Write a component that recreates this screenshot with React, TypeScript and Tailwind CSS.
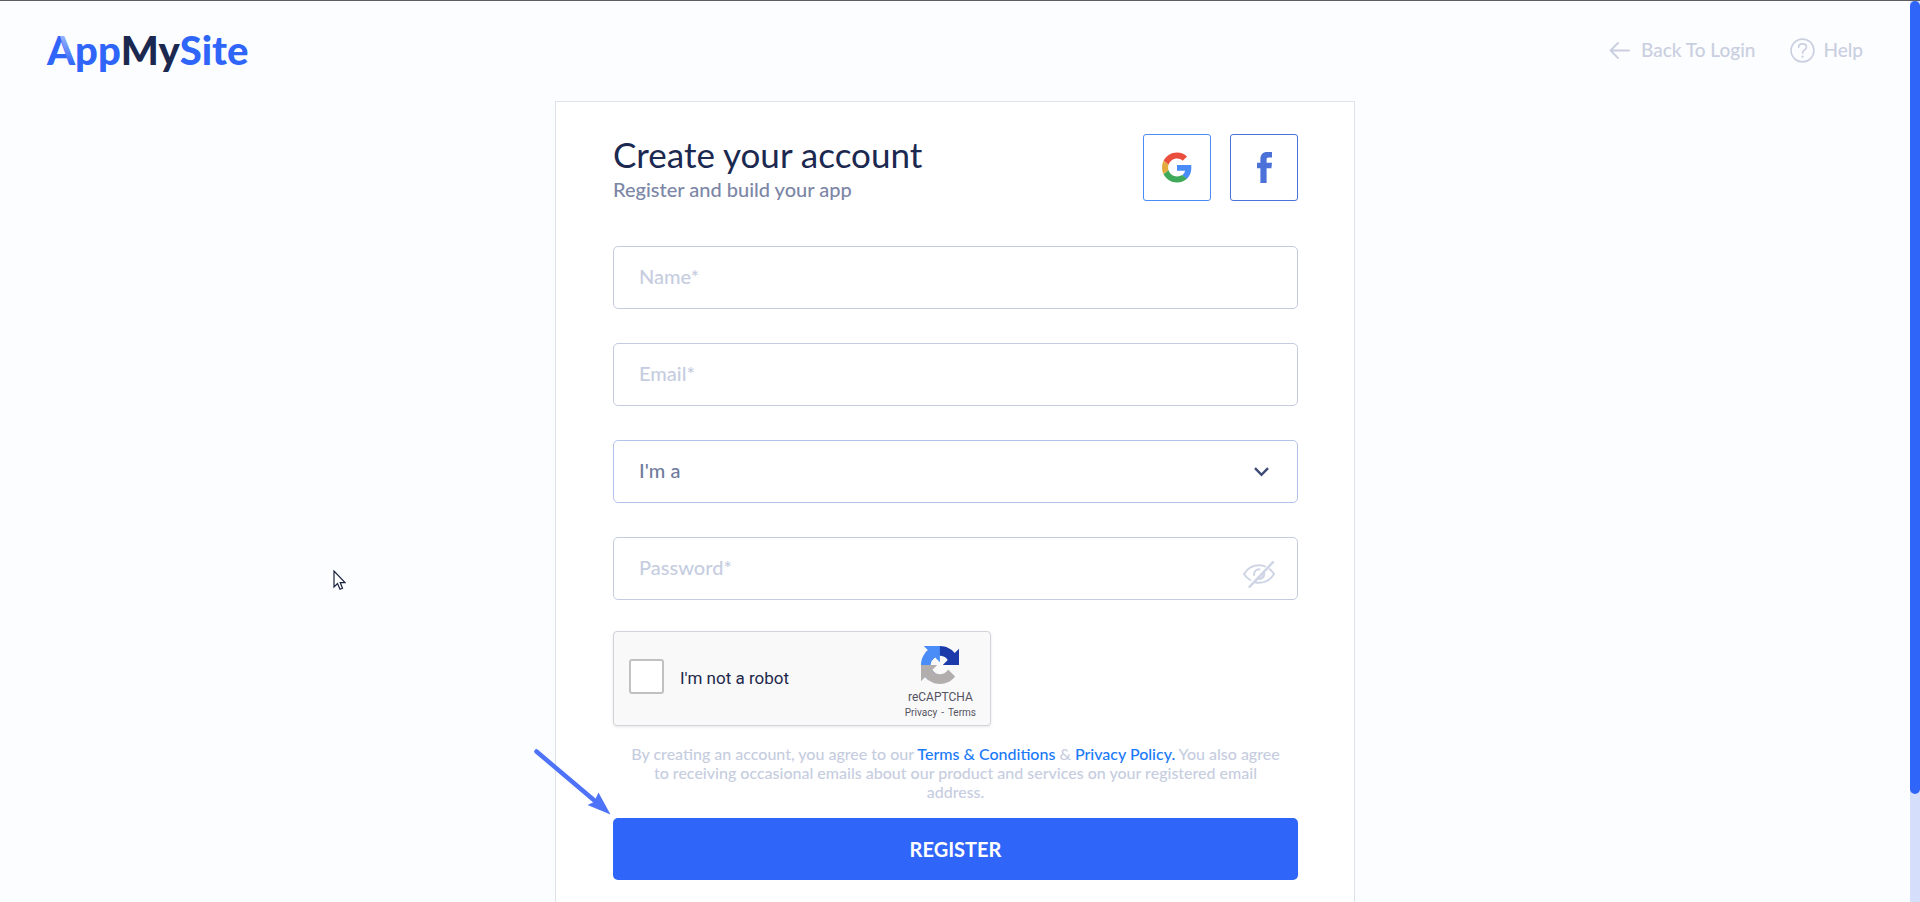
import { useState } from "react";
import type { ReactNode } from "react";

const fieldClass =
  "block h-[63px] w-full rounded-[5px] border border-[#c5cbde] bg-white px-[25px] pb-[3px] text-[20px] font-medium text-[#1b2850] placeholder:text-[#c6cde0] outline-none focus:border-[#2f65f9]";

function Logo() {
  return (
    <a href="#" aria-label="AppMySite" className="relative flex text-[40px] leading-[44px] font-black">
      <span className="text-[#2f65f9]">App</span>
      <span className="text-[#1b2850]">My</span>
      <span className="text-[#2f65f9]">Site</span>
      {/* Pale shading on the right leg of the A */}
      <svg className="pointer-events-none absolute top-2 left-3" width="16" height="29" viewBox="0 0 16 29">
        <defs>
          <linearGradient id="leg" x1="0" y1="0" x2="0" y2="1">
            <stop offset="0" stopColor="#fff" stopOpacity="0.5" />
            <stop offset="1" stopColor="#fff" stopOpacity="0" />
          </linearGradient>
        </defs>
        <path d="M1 0H6L16 29H10Z" fill="url(#leg)" />
      </svg>
    </a>
  );
}

function BackIcon() {
  return (
    <svg width="21" height="17" viewBox="0 0 21 17" fill="none" stroke="currentColor" strokeWidth="1.8" strokeLinecap="round" strokeLinejoin="round">
      <path d="M20 8.5H1.5M9 1L1.5 8.5L9 16" />
    </svg>
  );
}

function HelpIcon() {
  return (
    <svg width="25" height="25" viewBox="0 0 25 25" fill="none" stroke="currentColor" strokeWidth="1.6" strokeLinecap="round">
      <circle cx="12.5" cy="12.5" r="11.4" />
      <path d="M8.6 9.4C8.6 7.2 10.3 5.9 12.5 5.9S16.5 7.3 16.5 9.3C16.5 12 12.6 12 12.6 15.2" />
      <path d="M12.6 18.6V18.7" strokeWidth="2.2" />
    </svg>
  );
}

function GoogleIcon() {
  return (
    <svg width="30" height="31" viewBox="0 0 48 48">
      <path fill="#EA4F3D" d="M24 9.5c3.54 0 6.71 1.22 9.21 3.6l6.85-6.85C35.9 2.38 30.47 0 24 0 14.62 0 6.51 5.38 2.56 13.22l7.98 6.19C12.43 13.72 17.74 9.5 24 9.5z" />
      <path fill="#4A8CF7" d="M46.98 24.55c0-1.57-.15-3.09-.38-4.55H24v9.02h12.94c-.58 2.96-2.26 5.48-4.78 7.18l7.73 6c4.51-4.18 7.09-10.36 7.09-17.65z" />
      <path fill="#E3AA3E" d="M10.53 28.59c-.48-1.45-.76-2.99-.76-4.59s.27-3.14.76-4.59l-7.98-6.19C.92 16.46 0 20.12 0 24c0 3.88.92 7.54 2.56 10.78l7.97-6.19z" />
      <path fill="#3FA95A" d="M24 48c6.48 0 11.93-2.13 15.89-5.81l-7.73-6c-2.15 1.45-4.92 2.3-8.16 2.3-6.26 0-11.57-4.22-13.47-9.91l-7.98 6.19C6.51 42.62 14.62 48 24 48z" />
    </svg>
  );
}

function FacebookIcon() {
  return (
    <svg width="15" height="31" viewBox="0 0 15 31" fill="#4c72da">
      <path d="M3.4 31V16.2H0V10.8H3.4V7.4C3.4 2.6 5.6 0 10.4 0H15V5.4H11.6C10 5.4 9.6 6.2 9.6 7.8V10.8H15L14.4 16.2H9.6V31Z" />
    </svg>
  );
}

function EyeOffIcon() {
  return (
    <svg width="32" height="27" viewBox="0 0 32 27" fill="none" stroke="#cfd5e5" strokeWidth="2" strokeLinecap="round">
      <path d="M7.2 19C4.6 17.5 2.5 15.3 1 13C4.5 7.5 9.8 4.3 16 4.3C18.2 4.3 20.2 4.7 22 5.4" />
      <path d="M26.5 8.2C28.4 9.5 29.8 11.2 31 13C27.6 18.5 22.2 21.7 16 21.7C14.6 21.7 13.2 21.5 12 21.2" />
      <path d="M11 14C10.8 10.5 13 8.4 16.4 8.3" />
      <path d="M16 17.8C19 17.8 21 15.8 21 12.6" strokeWidth="2.6" />
      <path d="M30 1.2L6.5 25.8" strokeWidth="2.4" />
    </svg>
  );
}

function RecaptchaIcon() {
  return (
    <svg width="38" height="38" viewBox="0 0 64 64">
      <path fill="#1c3aa9" d="M64 31.955l-.033-1.37V4.687l-7.16 7.16C50.948 4.674 42.033.093 32.05.093c-10.39 0-19.622 4.96-25.458 12.64l11.736 11.86a15.55 15.55 0 0 1 4.754-5.334c2.05-1.6 4.952-2.906 8.968-2.906.485 0 .86.057 1.135.163 4.976.393 9.288 3.14 11.828 7.124l-8.307 8.307L64 31.953" />
      <path fill="#4a8df8" d="M31.862.094l-1.37.033H4.594l7.16 7.16C4.58 13.147 0 22.06 0 32.046c0 10.39 4.96 19.622 12.64 25.458L24.5 45.768a15.55 15.55 0 0 1-5.334-4.754c-1.6-2.05-2.906-4.952-2.906-8.968 0-.485.057-.86.163-1.135.393-4.976 3.14-9.288 7.124-11.828l8.307 8.307L31.86.095" />
      <path fill="#b3aeae" d="M.001 32.045l.033 1.37v25.898l7.16-7.16c5.86 7.173 14.774 11.754 24.76 11.754 10.39 0 19.622-4.96 25.458-12.64l-11.736-11.86a15.55 15.55 0 0 1-4.754 5.334c-2.05 1.6-4.952 2.906-8.968 2.906-.485 0-.86-.057-1.135-.163-4.976-.393-9.288-3.14-11.828-7.124l8.307-8.307c-10.522.04-22.4.066-27.295-.005" />
    </svg>
  );
}

function SocialButton({ label, className, children }: { label: string; className: string; children: ReactNode }) {
  return (
    <button type="button" aria-label={label} className={`flex h-[67px] w-[68px] items-center justify-center rounded-[3px] border bg-white ${className}`}>
      {children}
    </button>
  );
}

function Captcha() {
  return (
    <div className="mt-[31px] flex h-[95px] w-[378px] items-center justify-between rounded-[4px] border border-[#d3d3dc] bg-[#f9f9f9] pr-[14px] pl-[15px] font-[Roboto,sans-serif] shadow-[0_1px_3px_rgba(0,0,0,0.1)]">
      <label className="mb-1 flex items-center gap-4 text-[17px] text-[#22284b]">
        <input type="checkbox" className="size-[35px] appearance-none rounded-[3px] border-2 border-[#c1c1c1] bg-white" />
        <span className="pt-1">I'm not a robot</span>
      </label>
      <div className="flex flex-col items-center pt-2 text-[#555261]">
        <RecaptchaIcon />
        <span className="mt-1 text-[12px] leading-[18px]">reCAPTCHA</span>
        <span className="flex gap-1 text-[10px] leading-[14px]">
          <a href="#">Privacy</a>-<a href="#">Terms</a>
        </span>
      </div>
    </div>
  );
}

function RegisterForm() {
  const [visible, setVisible] = useState(false);

  return (
    <form className="mt-[42px]" onSubmit={(e) => e.preventDefault()}>
      <div className="flex flex-col gap-[34px]">
        <input aria-label="Name" placeholder="Name*" className={fieldClass} />
        <input aria-label="Email" type="email" placeholder="Email*" className={fieldClass} />
        <div className="relative">
          <select
            aria-label="I'm a"
            className="block h-[63px] w-full appearance-none rounded-[5px] border border-[#b4c3ec] bg-white px-[25px] pb-[3px] text-[20px] font-medium text-[#707b9d] outline-none"
          >
            <option>I'm a</option>
          </select>
          <svg className="pointer-events-none absolute top-[27px] right-[29px]" width="15" height="10" viewBox="0 0 15 10" fill="none" stroke="#3c4a75" strokeWidth="2.4">
            <path d="M1 1.2L7.5 7.8L14 1.2" />
          </svg>
        </div>
        <div className="relative">
          <input aria-label="Password" type={visible ? "text" : "password"} placeholder="Password*" className={fieldClass} />
          <button type="button" aria-label="Show password" onClick={() => setVisible(!visible)} className="absolute top-6 right-[23px]">
            <EyeOffIcon />
          </button>
        </div>
      </div>

      <Captcha />

      <p className="mt-[18px] px-[14px] text-center text-[16px] leading-[19px] font-medium text-[#c6cde0]">
        By creating an account, you agree to our{" "}
        <a href="#" className="text-[#1a7af8]">Terms & Conditions</a> &{" "}
        <a href="#" className="text-[#1a7af8]">Privacy Policy.</a> You also agree to receiving occasional
        emails about our product and services on your registered email address.
      </p>

      {/* Submit, with the pointer arrow over its corner */}
      <div className="relative mt-[17px]">
        <button type="submit" className="block h-[62px] w-full rounded-[5px] bg-[#2f65f9] text-[20px] font-bold text-white">
          REGISTER
        </button>
        <svg className="pointer-events-none absolute -top-[71px] -left-[79px]" width="78" height="69" viewBox="0 0 78 69">
          <path d="M2.5 4.5L61 54" stroke="#4f73f8" strokeWidth="4.5" strokeLinecap="round" />
          <path d="M76.5 67.5L53.5 58L60 55L64.5 45.5Z" fill="#4f73f8" />
        </svg>
      </div>
    </form>
  );
}

export default function App() {
  return (
    <div className="flex h-screen overflow-hidden border-t border-[#5e5e64] bg-[#fcfdff] font-[Lato,sans-serif]">
      <div className="flex min-w-0 flex-1 flex-col">
        <header className="flex h-[100px] shrink-0 items-center justify-between px-[47px] pb-[2px]">
          <Logo />
          <nav className="flex items-center gap-[35px] text-[19px] font-medium text-[#c9cfe0]">
            <a href="#" className="flex items-center gap-[11px]">
              <BackIcon />
              Back To Login
            </a>
            <a href="#" className="flex items-center gap-2">
              <HelpIcon />
              Help
            </a>
          </nav>
        </header>

        <main className="mx-auto w-full max-w-[800px] flex-1 border border-b-0 border-[#dce1ea] bg-white pt-8 pr-14 pb-14 pl-[57px]">
          <div className="flex items-start justify-between">
            <div>
              <h1 className="text-[35px] leading-[40px] text-[#1b2850]">Create your account</h1>
              <p className="text-[20px] leading-[30px] font-medium text-[#7c86a6]">Register and build your app</p>
            </div>
            <div className="flex gap-[19px]">
              <SocialButton label="Sign up with Google" className="border-[#4a8cf7]">
                <GoogleIcon />
              </SocialButton>
              <SocialButton label="Sign up with Facebook" className="border-[#4c72da]">
                <FacebookIcon />
              </SocialButton>
            </div>
          </div>
          <RegisterForm />
        </main>
      </div>

      {/* Scrollbar */}
      <div className="w-[10px] shrink-0 bg-[#d5dffb]">
        <div className="h-[88%] rounded-full bg-[#2f65f9]" />
      </div>

      {/* Mouse cursor */}
      <svg className="pointer-events-none absolute top-[570px] left-[333px]" width="13" height="21" viewBox="0 0 13 21">
        <path d="M1 1V17L4.5 13.5L7 19.3L9.5 18.2L7.2 12.6H12Z" fill="#fff" stroke="#1b2440" strokeWidth="1.2" />
      </svg>
    </div>
  );
}
